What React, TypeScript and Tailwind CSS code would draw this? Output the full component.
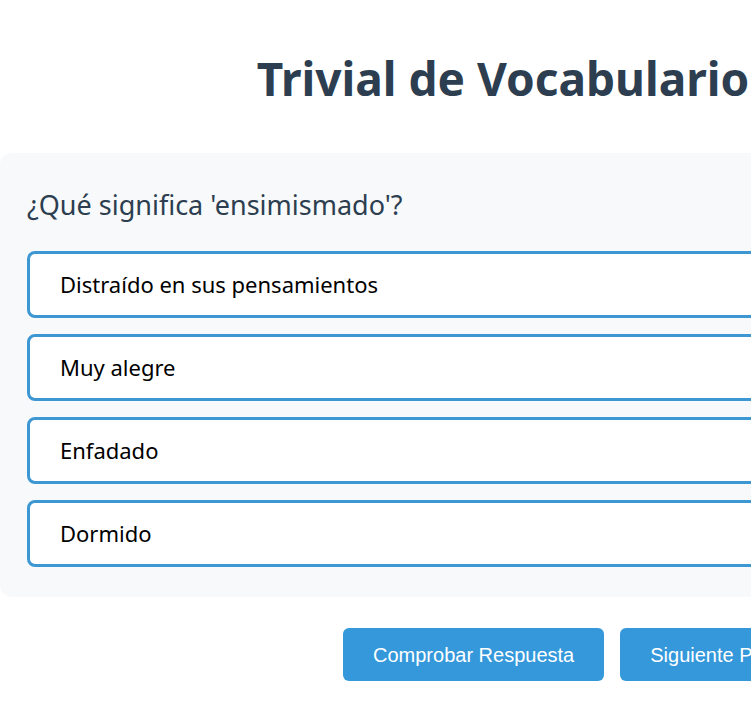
export default function App() {
  const options = [
    "Distraído en sus pensamientos",
    "Muy alegre",
    "Enfadado",
    "Dormido",
  ];
  return (
    <div className="w-[1006px] bg-white" style={{ fontFamily: "'Noto Sans', sans-serif" }}>
      <h1 className="pt-[46px] text-center text-[46px] font-bold leading-[64px] text-[#2c3e50]">
        Trivial de Vocabulario
      </h1>
      <div className="mt-[43px] rounded-xl bg-[#f7f9fa] px-[27px] pt-[34px] pb-[30px]">
        <p className="text-[27px] leading-[36px] text-[#2c3e50]">
          ¿Qué significa 'ensimismado'?
        </p>
        <div className="mt-[28px] flex flex-col gap-[16px]">
          {options.map((o) => (
            <div
              key={o}
              className="flex h-[67px] items-center rounded-lg border-[3px] border-[#3d97d3] bg-white pl-[30px] text-[22px] text-black"
            >
              {o}
            </div>
          ))}
        </div>
      </div>
      <div
        className="mt-[31px] flex gap-4 pl-[343px]"
        style={{ fontFamily: "'Liberation Sans', Arial, sans-serif" }}
      >
        <button className="h-[53px] shrink-0 rounded-md bg-[#3498db] px-[30px] text-[20px] text-white">
          Comprobar Respuesta
        </button>
        <button className="h-[53px] shrink-0 rounded-md bg-[#3498db] px-[30px] text-[20px] text-white">
          Siguiente Pregunta
        </button>
      </div>
    </div>
  );
}
